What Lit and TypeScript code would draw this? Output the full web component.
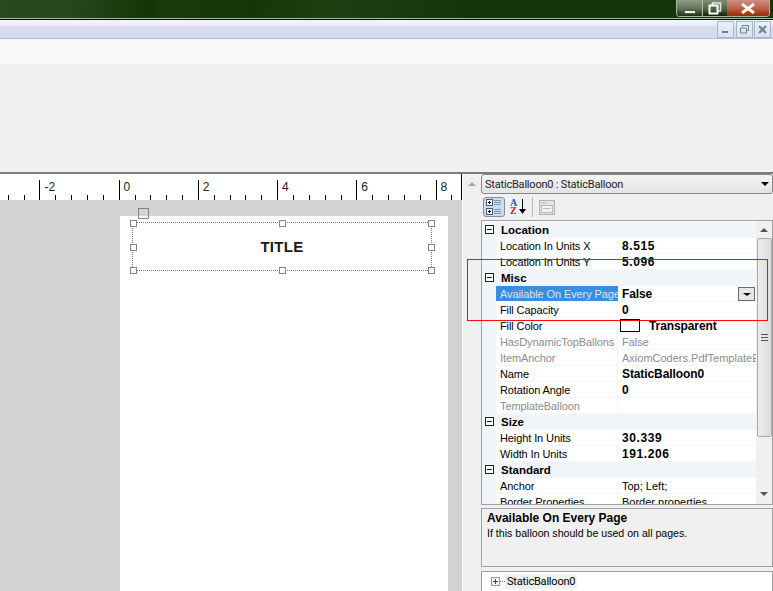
import { LitElement, css, html, nothing, svg } from "lit";
import { customElement } from "lit/decorators.js";

type Row =
  | { section: string }
  | { label: string; value: string; bold?: boolean; disabled?: boolean; selected?: boolean; swatch?: boolean };

const ROWS: Row[] = [
  { section: "Location" },
  { label: "Location In Units X", value: "8.515", bold: true },
  { label: "Location In Units Y", value: "5.096", bold: true },
  { section: "Misc" },
  { label: "Available On Every Page", value: "False", bold: true, selected: true },
  { label: "Fill Capacity", value: "0", bold: true },
  { label: "Fill Color", value: "Transparent", bold: true, swatch: true },
  { label: "HasDynamicTopBallons", value: "False", disabled: true },
  { label: "ItemAnchor", value: "AxiomCoders.PdfTemplateEditor.Balloon", disabled: true },
  { label: "Name", value: "StaticBalloon0", bold: true },
  { label: "Rotation Angle", value: "0", bold: true },
  { label: "TemplateBalloon", value: "", disabled: true },
  { section: "Size" },
  { label: "Height In Units", value: "30.339", bold: true },
  { label: "Width In Units", value: "191.206", bold: true },
  { section: "Standard" },
  { label: "Anchor", value: "Top; Left;" },
  { label: "Border Properties", value: "Border properties" },
];

// major ticks sit every 79.2px, minor ones every 15.85px
const RULER_LABELS = ["-2", "0", "2", "4", "6", "8"];

@customElement("app-root")
export class AppRoot extends LitElement {
  private renderRuler() {
    const ticks = [];
    for (let i = 0; i < 29; i++) {
      const x = Math.round(39.4 + (i - 2) * 15.85) + 0.5;
      const major = (i - 2) % 5 === 0;
      ticks.push(svg`<line x1=${x} x2=${x} y1=${major ? 6 : 21} y2="26" stroke="#000"></line>`);
    }
    return html`<svg class="ruler-svg" width="462" height="26" viewBox="0 0 462 26">
      ${ticks}
      ${RULER_LABELS.map(
        (t, i) => svg`<text x=${39.4 + i * 79.2 + 5} y="17" class="ruler-text">${t}</text>`
      )}
      <line x1="461.5" x2="461.5" y1="0" y2="26" stroke="#000"></line>
    </svg>`;
  }

  private renderRow(row: Row) {
    if ("section" in row) {
      return html`<div class="row section">
        <span class="gutter"><span class="expander"></span></span>
        <span class="section-name">${row.section}</span>
      </div>`;
    }
    const numeric = /^[\d.]+$/.test(row.value);
    return html`<div class="row ${row.disabled ? "disabled" : ""}">
      <span class="gutter"></span>
      <span class="label ${row.selected ? "selected" : ""}">${row.label}</span>
      <span class="value ${row.bold ? "bold" : ""} ${numeric ? "num" : ""}">
        ${row.swatch ? html`<span class="swatch"></span>` : nothing}
        <span class="value-text">${row.value}</span>
        ${row.selected ? html`<span class="drop"><span class="drop-arrow"></span></span>` : nothing}
      </span>
    </div>`;
  }

  render() {
    return html`
      <div class="titlebar">
        <div class="win-buttons">
          <span class="win-btn min"><span class="min-glyph"></span></span>
          <span class="win-btn restore">
            <svg width="14" height="13" viewBox="0 0 14 13">
              <path d="M4.5 3V1h8v8h-2.5" fill="none" stroke="#e8e8e8" stroke-width="1.6"></path>
              <rect x="1.5" y="3.5" width="8" height="8" fill="none" stroke="#fff" stroke-width="2"></rect>
            </svg>
          </span>
          <span class="win-btn close">
            <svg width="16" height="11" viewBox="0 0 16 11">
              <path d="M2 1l12 9M14 1L2 10" stroke="#f4f4f4" stroke-width="3"></path>
            </svg>
          </span>
        </div>
      </div>
      <div class="mdibar">
        <span class="mdi-btn first">
          <svg width="9" height="9" viewBox="0 0 9 9"><rect x="1" y="6" width="6" height="2" fill="#6f7f93"></rect></svg>
        </span>
        <span class="mdi-btn">
          <svg width="9" height="9" viewBox="0 0 9 9">
            <path d="M2.5 2V.5h6v5H7M.5 3h6v5h-6z" fill="none" stroke="#6f7f93"></path>
          </svg>
        </span>
        <span class="mdi-btn">
          <svg width="9" height="9" viewBox="0 0 9 9"><path d="M1 1l7 7M8 1L1 8" stroke="#6f7f93" stroke-width="2"></path></svg>
        </span>
      </div>
      <div class="strip"></div>
      <div class="ribbon"></div>
      <div class="workspace">
        <div class="designer">
          <div class="ruler">${this.renderRuler()}</div>
          <div class="canvas">
            <div class="page">
              <span class="grab"></span>
              <div class="balloon">
                <span class="title">TITLE</span>
                <span class="h tl"></span><span class="h tc"></span><span class="h tr"></span>
                <span class="h ml"></span><span class="h mr"></span>
                <span class="h bl"></span><span class="h bc"></span><span class="h br"></span>
              </div>
            </div>
          </div>
        </div>
        <div class="gap"><span class="arrow-up"></span></div>
        <div class="panel">
          <div class="combo">
            <span>StaticBalloon0 : StaticBalloon</span>
            <span class="combo-arrow"></span>
          </div>
          <div class="tools">
            <span class="tool-on">
              <svg width="18" height="18" viewBox="0 0 18 18">
                <rect x="1.5" y="1.5" width="6" height="6" fill="#fff" stroke="#4a5a78"></rect>
                <rect x="1.5" y="10.5" width="6" height="6" fill="#fff" stroke="#4a5a78"></rect>
                <path d="M3 4.5h3M4.5 3v3M3 13.5h3M4.5 12v3" stroke="#000"></path>
                <path d="M9 2.5h7M9 4.5h7M9 6.5h7M9 11.5h7M9 13.5h7M9 15.5h7" stroke="#8a93a5"></path>
              </svg>
            </span>
            <span class="az"><span class="az-a">A</span><span class="az-z">Z</span></span>
            <svg class="az-arrow" width="7" height="16" viewBox="0 0 7 16">
              <path d="M3.5 0v11" stroke="#000"></path><path d="M0 10h7l-3.5 5z" fill="#000"></path>
            </svg>
            <span class="tool-sep"></span>
            <svg width="16" height="15" viewBox="0 0 16 15">
              <rect x=".5" y=".5" width="15" height="14" fill="#e4e4e4" stroke="#b0b0b0"></rect>
              <rect x="2.5" y="5.5" width="11" height="7" fill="#f2f2f2" stroke="#b8b8b8"></rect>
              <path d="M4 8.5h8M2 3h6" stroke="#bcbcbc"></path>
            </svg>
          </div>
          <div class="grid">
            <div class="rows">${ROWS.map((r) => this.renderRow(r))}</div>
            <div class="scrollbar">
              <span class="arrow-up dark"></span>
              <span class="thumb"><span class="grip"></span></span>
              <span class="arrow-down"></span>
            </div>
          </div>
          <div class="desc">
            <div class="desc-title">Available On Every Page</div>
            <div class="desc-text">If this balloon should be used on all pages.</div>
          </div>
          <div class="tree">
            <span class="plus">
              <svg width="9" height="9" viewBox="0 0 9 9">
                <rect x=".5" y=".5" width="8" height="8" fill="#f4f4f4" stroke="#9a9a9a"></rect>
                <path d="M2 4.5h5M4.5 2v5" stroke="#444"></path>
              </svg>
            </span>
            <span class="dots"></span>
            <span class="node">StaticBalloon0</span>
          </div>
        </div>
        <span class="callout"></span>
      </div>
    `;
  }

  static styles = css`
    :host {
      display: flex;
      flex-direction: column;
      width: 773px;
      height: 591px;
      overflow: hidden;
      position: relative;
      background: #f0f0f0;
      font-family: "Liberation Sans", Arial, sans-serif;
      font-size: 11px;
      color: #000;
    }
    .titlebar {
      flex: none;
      height: 20px;
      box-sizing: border-box;
      display: flex;
      justify-content: flex-end;
      padding-right: 3px;
      background: linear-gradient(100deg, #2a4a1c 0, #28471a 70px, #143506 150px, #1a3a0c 165px, #153607 250px, #1e3f10 330px, #133406 480px, #143507 770px);
      border-bottom: 1px solid #000;
      box-shadow: inset 0 -1px 0 #a9b8a2;
    }
    .win-buttons {
      display: flex;
      height: 16px;
      border: 1px solid #a8b4a4;
      border-top: none;
      border-radius: 0 0 4px 4px;
      overflow: hidden;
    }
    .win-btn {
      display: flex;
      align-items: center;
      justify-content: center;
      height: 100%;
      box-sizing: border-box;
    }
    .win-btn.min {
      width: 26px;
      background: linear-gradient(#8f9f86, #5f7357 55%, #1c3312);
      border-right: 1px solid #b6c0b2;
    }
    .min-glyph {
      width: 12px;
      height: 4px;
      margin-top: 7px;
      background: #f0f0f0;
      border: 1px solid #555;
      box-sizing: border-box;
    }
    .win-btn.restore {
      width: 24px;
      background: linear-gradient(#7e8f75, #4f6647 55%, #0c2406);
    }
    .win-btn.close {
      width: 42px;
      background: linear-gradient(#cf8f80, #b85f4c 55%, #b23a12 80%, #8e3316);
    }
    .mdibar {
      flex: none;
      height: 19px;
      box-sizing: border-box;
      display: flex;
      justify-content: flex-end;
      gap: 1px;
      padding: 1px 2px 0 0;
      background: linear-gradient(#f4f6fa 0, #e9edf5 5px, #d6dbee 7px, #d5daee 100%);
      border-bottom: 1px solid #b6b8cc;
    }
    .mdi-btn {
      width: 17px;
      height: 17px;
      box-sizing: border-box;
      display: flex;
      align-items: center;
      justify-content: center;
      background: linear-gradient(#eaf1f8, #d6e2f0);
      border: 1px solid #a4b8c8;
    }
    .mdi-btn.first {
      margin-right: 1px;
    }
    .strip {
      flex: none;
      height: 25px;
      background: #f8f8f8;
    }
    .ribbon {
      flex: none;
      height: 108px;
      background: #f0f0f0;
      border-bottom: 2px solid #7c7c7c;
    }
    .workspace {
      flex: 1;
      min-height: 0;
      display: flex;
      position: relative;
    }
    .designer {
      flex: none;
      width: 462px;
      display: flex;
      flex-direction: column;
      border-right: 1px solid #fafafa;
    }
    .ruler {
      flex: none;
      height: 26px;
      background: #fff;
    }
    .ruler-svg {
      display: block;
    }
    .ruler-text {
      font-family: "Liberation Sans", Arial, sans-serif;
      font-size: 12px;
      fill: #222;
    }
    .canvas {
      flex: 1;
      min-height: 0;
      background: #d3d3d3;
      padding: 16px 14px 0 120px;
    }
    .page {
      position: relative;
      height: 100%;
      background: #fff;
      padding: 6px 16px 0 12px;
      box-sizing: border-box;
    }
    .grab {
      position: absolute;
      left: 18px;
      top: -8px;
      width: 11px;
      height: 11px;
      border: 1px solid #858585;
      box-sizing: border-box;
    }
    .balloon {
      position: relative;
      height: 49px;
      display: flex;
      align-items: center;
      justify-content: center;
      border: 1px dotted #7a7a7a;
      box-sizing: border-box;
    }
    .title {
      font-size: 15px;
      font-weight: 700;
      letter-spacing: 0.3px;
      color: #1a1a1a;
    }
    .h {
      position: absolute;
      width: 7px;
      height: 7px;
      box-sizing: border-box;
      border: 1px solid #858585;
      background: #fff;
    }
    .tl, .tc, .tr { top: -3px; }
    .ml, .mr { top: 21px; }
    .bl, .bc, .br { bottom: -4px; }
    .tl, .ml, .bl { left: -3px; }
    .tc, .bc { left: 146px; }
    .tr, .mr, .br { right: -4px; }
    .gap {
      flex: none;
      width: 18px;
      display: flex;
      justify-content: center;
      padding-top: 8px;
      box-sizing: border-box;
      background: #f0f0f0;
    }
    .arrow-up {
      width: 0;
      height: 0;
      border-left: 4px solid transparent;
      border-right: 4px solid transparent;
      border-bottom: 4px solid #a8a8a8;
    }
    .arrow-up.dark {
      border-bottom-color: #555;
    }
    .arrow-down {
      width: 0;
      height: 0;
      margin-top: auto;
      margin-bottom: 8px;
      border-left: 4px solid transparent;
      border-right: 4px solid transparent;
      border-top: 4px solid #555;
    }
    .panel {
      flex: 1;
      min-width: 0;
      display: flex;
      flex-direction: column;
    }
    .combo {
      flex: none;
      height: 20px;
      box-sizing: border-box;
      display: flex;
      align-items: center;
      justify-content: space-between;
      padding: 0 3px 0 3px;
      border: 1px solid #8a8a8a;
      border-radius: 3px;
      background: linear-gradient(#f4f4f4, #e4e4e4);
      font-family: Roboto, "Liberation Sans", sans-serif;
      font-size: 11px;
      letter-spacing: -0.2px;
      color: #222;
    }
    .combo-arrow {
      width: 0;
      height: 0;
      border-left: 4px solid transparent;
      border-right: 4px solid transparent;
      border-top: 4px solid #000;
    }
    .tools {
      flex: none;
      height: 26px;
      box-sizing: border-box;
      display: flex;
      align-items: center;
      padding-left: 2px;
    }
    .tool-on {
      width: 22px;
      height: 20px;
      display: flex;
      align-items: center;
      justify-content: center;
      box-sizing: border-box;
      border: 1px solid #7f8ea8;
      border-radius: 3px;
      background: #c9ddf0;
    }
    .az {
      display: flex;
      flex-direction: column;
      margin-left: 5px;
      font: 700 10px/8px "Liberation Serif", serif;
    }
    .az-a { color: #2a52b8; }
    .az-z { color: #b02a2a; }
    .az-arrow {
      margin-left: 2px;
    }
    .tool-sep {
      width: 1px;
      height: 20px;
      margin: 0 6px 0 6px;
      background: #b8b8b8;
    }
    .grid {
      flex: none;
      height: 285px;
      box-sizing: border-box;
      display: flex;
      overflow: hidden;
      border: 1px solid #a0a0a0;
      background: #fff;
    }
    .rows {
      flex: 1;
      min-width: 0;
      overflow: hidden;
      padding-top: 1px;
    }
    .row {
      height: 16px;
      box-sizing: border-box;
      display: flex;
      align-items: center;
      border-bottom: 1px solid #f2f5fa;
      white-space: nowrap;
    }
    .row.section {
      background: #f1f4f9;
    }
    .gutter {
      flex: none;
      width: 14px;
      height: 100%;
      display: flex;
      align-items: center;
      padding-left: 1px;
      box-sizing: border-box;
      background: #f1f4f9;
    }
    .expander {
      position: relative;
      width: 9px;
      height: 9px;
      margin-left: 2px;
      box-sizing: border-box;
      border: 1px solid #222;
      background: #fff;
    }
    .expander::after {
      content: "";
      position: absolute;
      left: 1px;
      right: 1px;
      top: 3px;
      height: 1px;
      background: #222;
    }
    .section-name {
      margin-left: 5px;
      font-weight: 700;
      font-size: 11.5px;
    }
    .label {
      flex: none;
      width: 122px;
      height: 100%;
      box-sizing: border-box;
      padding: 1px 0 0 4px;
      line-height: 14px;
      letter-spacing: -0.1px;
      border-right: 1px solid #f2f5fa;
      overflow: hidden;
    }
    .label.selected {
      background: #3a8de0;
      color: #d8e6f6;
      border-right: none;
    }
    .value {
      flex: 1;
      min-width: 0;
      height: 100%;
      box-sizing: border-box;
      display: flex;
      align-items: center;
      padding-left: 4px;
      overflow: hidden;
    }
    .value-text {
      flex: none;
    }
    .value.bold {
      font-weight: 700;
      font-size: 12px;
      letter-spacing: -0.1px;
    }
    .value.num {
      letter-spacing: 0.6px;
    }
    .row.disabled {
      color: #8c8c8c;
    }
    .swatch {
      flex: none;
      width: 20px;
      height: 13px;
      margin-left: -2px;
      margin-right: 9px;
      box-sizing: border-box;
      border: 1px solid #000;
      background: #fff;
    }
    .drop {
      flex: none;
      margin-left: auto;
      margin-right: 1px;
      width: 17px;
      height: 14px;
      box-sizing: border-box;
      display: flex;
      align-items: center;
      justify-content: center;
      border: 1px solid #6a6a6a;
      background: #e6e6e6;
    }
    .drop-arrow {
      margin-top: 2px;
      width: 0;
      height: 0;
      border-left: 4px solid transparent;
      border-right: 4px solid transparent;
      border-top: 3px solid #000;
    }
    .scrollbar {
      flex: none;
      width: 16px;
      display: flex;
      flex-direction: column;
      align-items: center;
      padding-top: 7px;
      box-sizing: border-box;
      background: #f0f0f0;
    }
    .thumb {
      margin-top: 6px;
      width: 15px;
      height: 199px;
      flex: none;
      box-sizing: border-box;
      display: flex;
      align-items: center;
      justify-content: center;
      border: 1px solid #a8a8a8;
      border-radius: 2px;
      background: linear-gradient(90deg, #ececec, #dcdcdc);
    }
    .grip {
      width: 7px;
      height: 7px;
      background: repeating-linear-gradient(#555 0, #555 1px, transparent 1px, transparent 3px);
    }
    .desc {
      flex: none;
      height: 59px;
      margin-top: 3px;
      padding: 2px 5px;
      box-sizing: border-box;
      border: 1px solid #a0a0a0;
      line-height: 15px;
    }
    .desc-title {
      font-weight: 700;
      font-size: 12px;
    }
    .desc-text {
      font-size: 10.6px;
    }
    .tree {
      flex: 1;
      min-height: 0;
      margin-top: 4px;
      display: flex;
      align-items: flex-start;
      padding: 2px 0 0 9px;
      box-sizing: border-box;
      background: #fff;
      border: 1px solid #a0a0a0;
      border-bottom: none;
      font-family: Roboto, "Liberation Sans", sans-serif;
      font-size: 11px;
      letter-spacing: -0.2px;
    }
    .plus {
      display: flex;
      margin-top: 3px;
    }
    .dots {
      width: 5px;
      margin-top: 7px;
      border-top: 1px dotted #808080;
    }
    .node {
      padding: 0 2px;
      line-height: 15px;
      background: #f0f0f0;
    }
    .callout {
      position: absolute;
      left: 467px;
      top: 85px;
      width: 301px;
      height: 62px;
      box-sizing: border-box;
      border: 1px solid #f01010;
      pointer-events: none;
    }
  `;
}
